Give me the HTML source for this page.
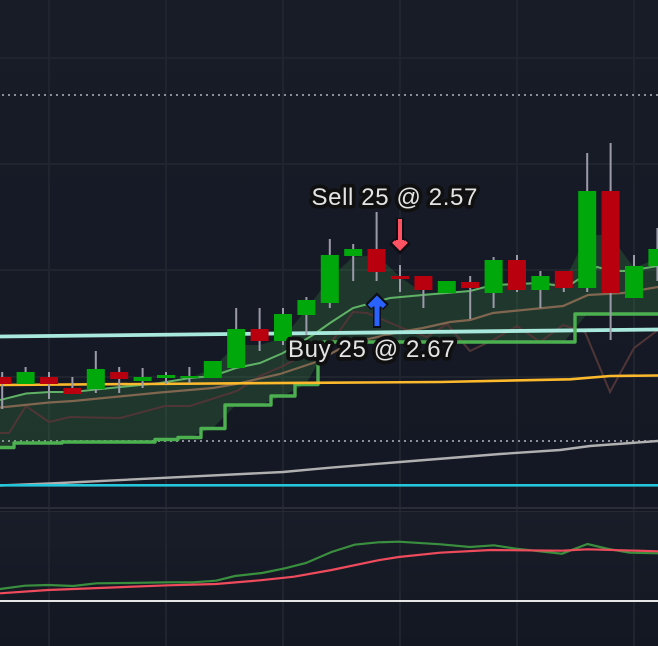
<!DOCTYPE html>
<html><head><meta charset="utf-8"><style>
html,body{margin:0;padding:0;background:#151925;width:658px;height:646px;overflow:hidden}
svg{display:block;position:absolute;left:0;top:0}
text{font-family:"Liberation Sans",sans-serif;font-size:24px;letter-spacing:.62px;fill:#e4e4e4;stroke:#101010;stroke-width:7.5px;paint-order:stroke;stroke-linejoin:round}
</style></head><body>
<svg width="658" height="646" viewBox="0 0 658 646" xmlns="http://www.w3.org/2000/svg">
<defs>
<linearGradient id="a" x1="0" y1="0" x2="0" y2="1"><stop offset="0" stop-color="#181c27"/><stop offset="1" stop-color="#141824"/></linearGradient>
<linearGradient id="b" x1="0" y1="0" x2="0" y2="1"><stop offset="0" stop-color="#191d28"/><stop offset="1" stop-color="#131722"/></linearGradient>
</defs>
<rect width="658" height="507" fill="url(#a)"/>
<rect y="511" width="658" height="135" fill="url(#b)"/>
<rect y="507" width="658" height="4" fill="#151822"/>
<g fill="#20242f">
<rect x="48" width="2" height="646"/><rect x="165" width="2" height="646"/><rect x="282" width="2" height="646"/><rect x="399" width="2" height="646"/><rect x="516" width="2" height="646"/><rect x="633" width="2" height="646"/>
<rect y="57" width="658" height="2"/><rect y="163" width="658" height="2"/><rect y="269" width="658" height="2"/><rect y="376" width="658" height="2"/>
</g>
<rect y="507" width="658" height="2" fill="#2a2d37"/><rect y="511" width="658" height="1" fill="#262a34"/>
<g stroke="#8d8f98" stroke-width="2" stroke-dasharray="2 4" fill="none">
<path d="M2 95H658"/><path d="M2 441H658"/>
</g>
<path fill="#4caf50" fill-opacity=".2" d="M0 401L26 393.5 50 392 73 392 96 389.5 143 385 166 383 190 378 213 368 236 345 260 345 283 338 306 310 330 278 353 257 377 255 400 277 423 293 470 291 493 285 540 283 564 282 587 235 610 235 634 268 658 258V314H587L564 342H330L306 384 283 396 260 405H236L213 428 190 437 166 439 143 442H26L3 447H0Z"/>
<polyline fill="none" stroke="#4f3536" stroke-width="2" points="0,433 9,433 26,406 49,422 70,417 120,418 165,406 190,406 237,391 260,376 283,366 320,346 333,340 353,312 367,313 407,330 427,337 447,324 470,351 493,340 517,326 540,342 563,325 585,332 610,392 634,348 658,330"/>
<polyline fill="none" stroke="#80664f" stroke-width="2.2" points="0,407.5 49,402.5 73,401 160,392.5 213,388 236,384 280,374 316,362 350,343 400,332 423,328 450,322 470,320 493,313 563,306 588,295 623,293 658,287"/>
<polyline fill="none" stroke="#5fb266" stroke-width="2" points="0,400 26,393.5 50,392 73,392 96,389.5 160,383 190,378 213,376 236,368 260,363 283,353 313,335 330,323 353,308 390,298 423,295 470,291 493,285 540,283 567,287 597,267 613,271 627,271 658,266"/>
<polyline fill="none" stroke="#a9e8dc" stroke-width="3.8" points="0,336.5 280,333.5 658,329.5"/>
<path fill="none" stroke="#4caf50" stroke-width="3.4" stroke-linejoin="round" d="M0 447.5H14V443H62V442H155V439.5H178V437.5H201V428.5H225V405H271V396H295V384.5H318V342H575V314H658"/>
<polyline fill="none" stroke="#b0b0b0" stroke-width="2.4" points="0,485.5 50,483.5 283,472 330,467.7 400,462 500,454 560,450 590,446 658,441"/>
<rect y="484" width="658" height="2.6" fill="#26c6da"/>
<polyline fill="none" stroke="#fdb92c" stroke-width="2.6" points="0,385 330,382.7 440,382 570,379.3 610,376 658,375.5"/>
<g fill="#9a9aa8">
<rect x="1.2" y="372" width="2" height="37"/><rect x="24.6" y="367" width="2" height="17"/><rect x="48" y="372" width="2" height="27"/><rect x="71.4" y="377" width="2" height="17"/><rect x="94.8" y="351" width="2" height="42"/><rect x="118.2" y="367" width="2" height="26"/><rect x="141.6" y="368" width="2" height="20"/><rect x="165" y="372" width="2" height="12"/><rect x="188.4" y="367" width="2" height="16"/><rect x="235.2" y="308" width="2" height="30"/><rect x="258.6" y="308" width="2" height="43"/><rect x="282" y="308" width="2" height="37"/><rect x="305.4" y="297" width="2" height="38"/><rect x="328.8" y="239" width="2" height="69"/><rect x="352.2" y="244" width="2" height="37"/><rect x="375.6" y="212" width="2" height="69"/><rect x="399" y="265" width="2" height="27"/><rect x="422.4" y="276" width="2" height="32"/><rect x="469.2" y="276" width="2" height="43"/><rect x="492.6" y="257" width="2" height="51"/><rect x="516" y="255" width="2" height="37"/><rect x="539.4" y="271" width="2" height="37"/><rect x="562.8" y="271" width="2" height="21"/><rect x="586.2" y="153" width="2" height="139"/><rect x="609.6" y="143" width="2" height="197"/><rect x="633" y="255" width="2" height="43"/><rect x="656.4" y="228" width="2" height="53"/>
</g>
<g fill="#00a80b">
<rect x="16.6" y="372" width="18" height="12"/><rect x="86.8" y="369" width="18" height="20"/><rect x="133.6" y="377" width="18" height="4"/><rect x="157" y="375" width="18" height="3"/><rect x="180.4" y="376" width="18" height="2"/><rect x="203.8" y="361" width="18" height="17"/><rect x="227.2" y="329" width="18" height="39"/><rect x="274" y="314" width="18" height="27"/><rect x="297.4" y="300" width="18" height="15"/><rect x="320.8" y="255" width="18" height="48"/><rect x="344.2" y="249" width="18" height="7"/><rect x="437.8" y="281" width="18" height="12"/><rect x="484.6" y="260" width="18" height="33"/><rect x="531.4" y="276" width="18" height="14"/><rect x="578.2" y="191" width="18" height="97"/><rect x="625" y="266" width="18" height="32"/><rect x="648.4" y="249" width="18" height="17"/>
</g>
<g fill="#b8000f">
<rect x="-6.8" y="377" width="18" height="7"/><rect x="40" y="377" width="18" height="7"/><rect x="63.4" y="388" width="18" height="6"/><rect x="110.2" y="372" width="18" height="7"/><rect x="250.6" y="329" width="18" height="12"/><rect x="367.6" y="249" width="18" height="23"/><rect x="391" y="276" width="18" height="3"/><rect x="414.4" y="276" width="18" height="14"/><rect x="461.2" y="282" width="18" height="6"/><rect x="508" y="260" width="18" height="30"/><rect x="554.8" y="271" width="18" height="17"/><rect x="601.6" y="191" width="18" height="102"/>
</g>
<path d="M377 328V298M368 307L377 298 386 307" fill="none" stroke="#0d0f14" stroke-width="8"/>
<path d="M377 326V299M369.5 306.5L377 299 384.5 306.5M373 304H381" fill="none" stroke="#2962ff" stroke-width="5"/>
<path d="M400 218V247M392 241L400 249 408 241" fill="none" stroke="#0d0f14" stroke-width="8"/>
<path d="M400 219V247M393.5 241.5L400 248 406.5 241.5M396 242H404" fill="none" stroke="#ff5263" stroke-width="4"/>
<text x="311.5" y="205">Sell 25 @ 2.57</text>
<text x="288" y="357">Buy 25 @ 2.67</text>
<polyline fill="none" stroke="#3a8f3f" stroke-width="2.2" points="0,589 25,585.7 48,585 73,586 96.5,583.3 126,583 168,582.3 193,582.3 216,580.7 235,576 262,573 285,568.3 306,563 331.5,552 354.6,544.7 378,542.3 398.7,541.7 440.6,544.3 470,547 494,545.3 516,548.7 562,553.7 587.5,544 608.5,549 629.5,552.7 658,553.3"/>
<polyline fill="none" stroke="#f04b5c" stroke-width="2.2" points="0,593.3 48,590 168,585.3 216,584 260,580.3 294,576.7 331.5,570 378,560.3 398.7,557 440,552.7 491,550 562,550.7 587.5,549.3 658,551.3"/>
<rect y="600" width="658" height="2" fill="#e6e6e6"/>
</svg>
</body></html>
